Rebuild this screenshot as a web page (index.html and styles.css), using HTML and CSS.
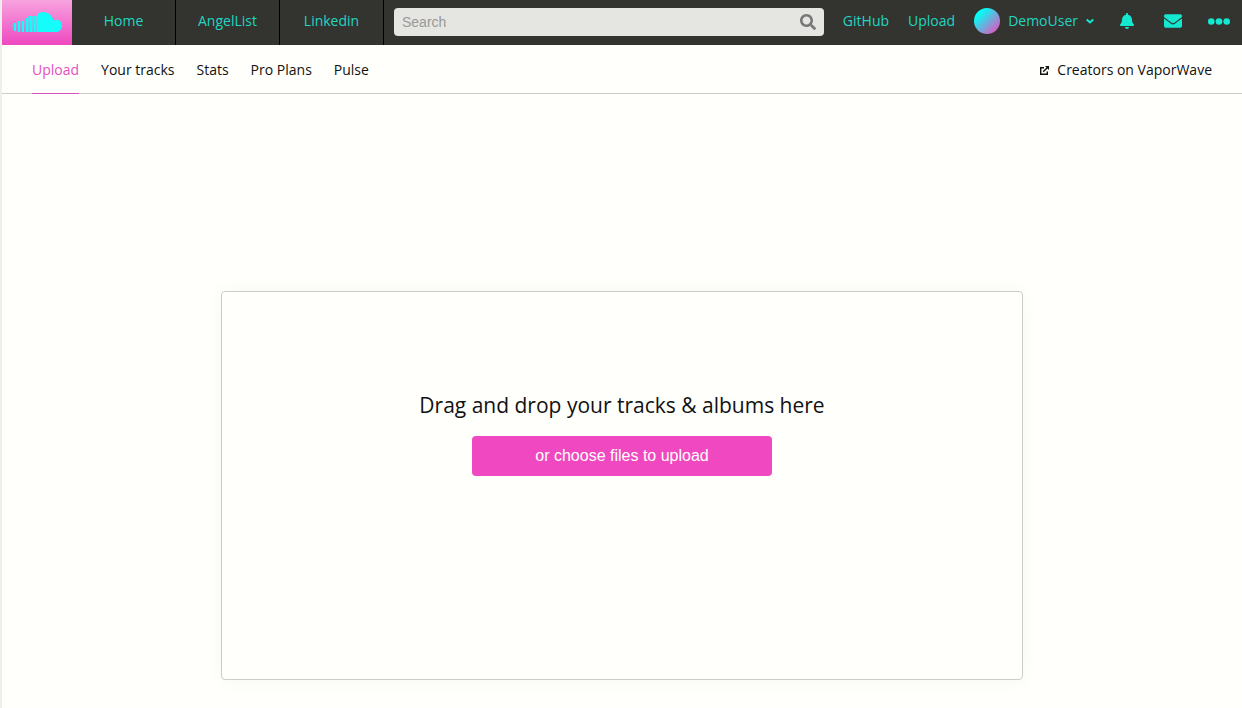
FILE: index.html
```html
<!DOCTYPE html>
<html lang="en">
<head>
<meta charset="utf-8">
<title>Upload - VaporWave</title>
<link rel="stylesheet" href="styles.css">
</head>
<body>
<header class="topbar">
  <a class="logo" href="#" aria-label="VaporWave">
    <svg viewBox="0 0 50 21" width="50" height="21" aria-hidden="true">
      <path d="M25 20V2q3-2 7-2 8 1 9.500 8.500 1.500-.8 3.500-.8 4.500.5 5 6-.5 5-5 6.300z"/>
      <path class="bars" d="M3 11v8M7 9v11M11 9v11M15 6v14M19 4v16M23 4v16"/>
      <path class="bars bars-thin" d="M1 12v6M5 10v9M9 8v12M13 7v13"/>
      <path class="bars bars-close" d="M17 4v16M21 4v16M24.500 4v16"/>
    </svg>
  </a>
  <nav class="main-nav">
    <a href="#">Home</a>
    <a href="#">AngelList</a>
    <a href="#">Linkedin</a>
  </nav>
  <form class="search">
    <input type="search" placeholder="Search" aria-label="Search">
    <button type="button" aria-label="Submit search">
      <svg viewBox="0 0 512 512" width="16" height="16"><path d="M505 442.700L405.300 343c-4.500-4.500-10.600-7-17-7H372c27.600-35.300 44-79.700 44-128C416 93.100 322.900 0 208 0S0 93.100 0 208s93.100 208 208 208c48.300 0 92.700-16.400 128-44v16.300c0 6.400 2.500 12.500 7 17l99.700 99.700c9.400 9.400 24.600 9.400 33.900 0l28.300-28.300c9.400-9.400 9.400-24.600.1-34zM208 336c-70.700 0-128-57.200-128-128 0-70.700 57.200-128 128-128 70.700 0 128 57.200 128 128 0 70.700-57.200 128-128 128z"/></svg>
    </button>
  </form>
  <nav class="user-nav">
    <a href="#">GitHub</a>
    <a href="#">Upload</a>
    <button class="user" type="button">
      <span class="avatar"></span>
      <span>DemoUser</span>
      <svg class="chevron" viewBox="0 0 8 6" width="8" height="6" aria-hidden="true"><path d="M.7 1.500L4 4.500l3.300-3"/></svg>
    </button>
  </nav>
  <div class="actions">
    <button type="button" aria-label="Notifications">
      <svg viewBox="0 0 448 512" width="14" height="16"><path d="M224 512c35.320 0 63.970-28.650 63.970-64H160.030c0 35.350 28.650 64 63.970 64zm215.390-149.710c-19.320-20.760-55.470-51.990-55.470-154.290 0-77.700-54.480-139.900-127.940-155.160V32c0-17.670-14.320-32-31.980-32s-31.980 14.330-31.980 32v20.840C118.560 68.100 64.080 130.300 64.080 208c0 102.300-36.150 133.530-55.470 154.290-6 6.450-8.660 14.160-8.610 21.710.11 16.400 12.980 32 32.100 32h383.800c19.120 0 32-15.600 32.100-32 .05-7.550-2.610-15.270-8.610-21.710z"/></svg>
    </button>
    <button type="button" aria-label="Messages">
      <svg viewBox="0 64 512 384" width="18" height="14"><path d="M502.300 190.800c3.900-3.100 9.700-.2 9.700 4.700V400c0 26.500-21.500 48-48 48H48c-26.500 0-48-21.500-48-48V195.600c0-5 5.700-7.800 9.700-4.700 22.400 17.400 52.100 39.500 154.100 113.600 21.100 15.400 56.700 47.800 92.200 47.600 35.700.3 72-32.800 92.300-47.600 102-74.100 131.600-96.300 154-113.700zM256 320c23.200.4 56.600-29.200 73.400-41.400 132.700-96.300 142.800-104.700 173.400-128.700 5.800-4.500 9.200-11.500 9.200-18.900v-19c0-26.500-21.500-48-48-48H48c-26.500 0-48 21.500-48 48v19c0 7.400 3.400 14.300 9.200 18.900 30.600 23.900 40.700 32.400 173.400 128.700 16.800 12.200 50.200 41.800 73.400 41.400z"/></svg>
    </button>
    <button type="button" aria-label="More">
      <svg viewBox="0 0 22 7" width="22" height="7"><circle cx="3.300" cy="3.500" r="3.300"/><circle cx="11" cy="3.500" r="3.300"/><circle cx="18.700" cy="3.500" r="3.300"/></svg>
    </button>
  </div>
</header>
<nav class="subnav">
  <a class="active" href="#">Upload</a>
  <a href="#">Your tracks</a>
  <a href="#">Stats</a>
  <a href="#">Pro Plans</a>
  <a href="#">Pulse</a>
  <a class="creators" href="#">
    <svg viewBox="0 0 9 9" width="9" height="9" aria-hidden="true"><path class="line" d="M4 1.700H.7v6.600h6.600V5.500M3.200 5.800L7.500 1.500"/><path d="M5 0h4v4z"/></svg>
    <span>Creators on VaporWave</span>
  </a>
</nav>
<main class="content">
  <section class="dropzone">
    <h1>Drag and drop your tracks &amp; albums here</h1>
    <button type="button">or choose files to upload</button>
  </section>
</main>
</body>
</html>
```
FILE: styles.css
```css
* {
  box-sizing: border-box;
}

body {
  margin: 0;
  min-height: 100vh;
  border-left: 2px solid #eeeeec;
  background: #fffffc;
  color: #111;
  font: 14px/20px "Open Sans", sans-serif;
}

a {
  color: inherit;
  text-decoration: none;
}

button {
  padding: 0;
  border: 0;
  background: none;
  color: inherit;
  font: inherit;
  cursor: pointer;
}

svg {
  display: block;
  fill: currentColor;
}

.topbar {
  display: flex;
  height: 45px;
  background: #333330;
  color: #21d6c2;
}

.logo {
  display: flex;
  align-items: center;
  justify-content: center;
  width: 70px;
  background: linear-gradient(#f7a3de, #ef48c0);
  color: #14fdfa;
}

.bars {
  fill: none;
  stroke: currentColor;
  stroke-width: 2;
}

.bars-thin {
  opacity: 0.2;
}

.bars-close {
  opacity: 0.6;
}

.main-nav {
  display: flex;
}

.main-nav a {
  width: 104px;
  padding: 11px 0;
  border-right: 1px solid #000;
  text-align: center;
}

.search {
  display: flex;
  flex: 1;
  align-items: center;
  height: 28px;
  margin: 8px 19px 0 10px;
  padding: 0 8px;
  border-radius: 4px;
  background: #e5e5e2;
  color: #777;
}

.search input {
  flex: 1;
  min-width: 0;
  padding: 0;
  border: 0;
  outline: 0;
  background: none;
  font: 14px/20px "Liberation Sans", sans-serif;
}

.search input::placeholder {
  color: #999;
}

.user-nav {
  display: flex;
  gap: 19px;
  padding: 11px 0;
}

.user {
  display: flex;
  align-items: center;
  gap: 8px;
  height: 20px;
}

.avatar {
  width: 26px;
  height: 26px;
  border-radius: 50%;
  background: linear-gradient(135deg, #00fff5 20%, #e553c0 90%);
}

.chevron {
  fill: none;
  stroke: #14e8d0;
  stroke-width: 2;
}

.actions {
  display: flex;
  align-items: center;
  gap: 24px;
  height: 42px;
  margin: 0 12px 0 22px;
  color: #14e8d0;
}

.actions button {
  display: grid;
  place-items: center;
  width: 22px;
}

.subnav {
  display: flex;
  gap: 22px;
  height: 49px;
  padding: 0 30px;
  border-bottom: 1px solid #ccccca;
}

.subnav a {
  height: 49px;
  padding: 15px 0 14px;
}

.subnav .active {
  border-bottom: 1px solid #d655b8;
  color: #e650be;
}

.subnav .creators {
  display: flex;
  align-items: center;
  gap: 8px;
  margin-left: auto;
}

.line {
  fill: none;
  stroke: currentColor;
  stroke-width: 1.4;
}

.content {
  padding: 197px 20px 28px;
}

.dropzone {
  display: flex;
  flex-direction: column;
  align-items: center;
  max-width: 802px;
  margin: 0 auto;
  padding: 98px 20px 203px;
  border: 1px solid #ccccca;
  border-radius: 4px;
  box-shadow: 0 0 20px rgba(0, 0, 0, 0.04);
}

.dropzone h1 {
  margin: 0 0 16px;
  font-size: 21px;
  font-weight: 400;
  line-height: 30px;
}

.dropzone button {
  width: 300px;
  max-width: 100%;
  height: 40px;
  border-radius: 4px;
  background: #ef48c0;
  color: #fffffc;
  font: 16px/20px "Liberation Sans", sans-serif;
}
```
